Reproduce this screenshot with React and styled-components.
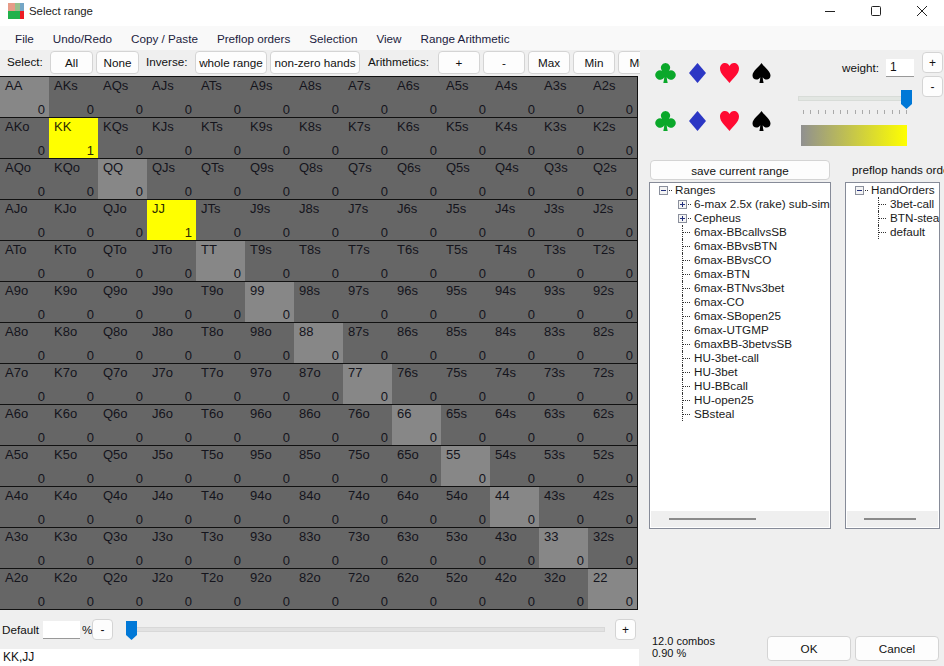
import styled, { createGlobalStyle } from "styled-components";

const GlobalStyle = createGlobalStyle`
  html, body {
    margin: 0;
    padding: 0;
    height: 100%;
    overflow: hidden;
    background: #efefef;
  }
  #root {
    height: 100%;
  }
`;

const Window = styled.div`
  width: 944px;
  height: 666px;
  display: flex;
  flex-direction: column;
  overflow: hidden;
  background: #efefef;
  color: #111;
  font-family: "Liberation Sans", Arial, sans-serif;
  font-size: 11.7px;
`;

const TitleBar = styled.div`
  height: 26px;
  box-sizing: border-box;
  flex: none;
  display: flex;
  align-items: center;
  background: #fff;
  padding: 0 0 5px 8px;
  margin-right: -1px;
`;
const AppIcon = styled.svg`
  width: 16px;
  height: 16px;
  flex: none;
`;
const TitleText = styled.div`
  margin-left: 5px;
  font-size: 11.4px;
  color: #222;
  flex: 1;
`;
const WinButton = styled.div`
  width: 46px;
  height: 21px;
  display: flex;
  align-items: center;
  justify-content: center;
`;

const MenuBar = styled.div`
  height: 24px;
  flex: none;
  display: flex;
  align-items: center;
  gap: 19px;
  padding-left: 15px;
  background: #f9f9f9;
`;
const MenuItem = styled.div`
  color: #1c1c40;
`;

const Main = styled.div`
  flex: 1;
  display: flex;
  min-height: 0;
`;
const LeftColumn = styled.div`
  width: 640px;
  flex: none;
  display: flex;
  flex-direction: column;
`;

const Toolbar = styled.div`
  height: 26px;
  flex: none;
  display: flex;
  align-items: center;
  padding-left: 7px;
  overflow: hidden;
  white-space: nowrap;
`;
const ToolLabel = styled.div`
  flex: none;
  width: ${(p) => p.$w}px;
  margin-bottom: 4px;
`;
const ToolButton = styled.div`
  flex: none;
  box-sizing: border-box;
  width: ${(p) => p.$w}px;
  height: 23px;
  margin: 0 ${(p) => p.$gap ?? 3}px 1px 0;
  display: flex;
  align-items: center;
  justify-content: center;
  background: #fdfdfd;
  border: 1px solid #d4d4d4;
  border-radius: 4px;
`;

const Grid = styled.div`
  display: grid;
  grid-template-columns: repeat(13, 49px);
  grid-auto-rows: 41px;
  width: 638px;
  box-sizing: border-box;
  border-top: 1px solid #111;
  border-left: 1px solid #111;
  background: #111;
`;
const Cell = styled.div`
  box-sizing: border-box;
  border-right: 1px solid #111;
  border-bottom: 1px solid #111;
  margin-left: -1px;
  background: ${(p) => (p.$on ? "#ffff00" : p.$pair ? "#878787" : "#666666")};
  color: ${(p) => (p.$on ? "#2c2c00" : "#14141c")};
  display: flex;
  flex-direction: column;
  justify-content: space-between;
  padding: 1px 4px 0 5px;
  font-size: 13px;
  line-height: 16px;
`;
const CellValue = styled.div`
  align-self: flex-end;
  line-height: 15px;
`;

const SliderRow = styled.div`
  height: 39px;
  flex: none;
  display: flex;
  align-items: center;
  padding-left: 2px;
`;
const DefaultLabel = styled.div`
  width: 41px;
  flex: none;
`;
const SmallInput = styled.div`
  box-sizing: border-box;
  width: ${(p) => p.$w}px;
  height: 18px;
  margin-top: ${(p) => p.$top || 0}px;
  background: #fff;
  border-bottom: 1px solid #999;
  flex: none;
  padding-left: 4px;
  line-height: 17px;
  font-size: 12px;
`;
const Percent = styled.span`
  margin: 0 2px 0 2px;
  width: 8px;
  flex: none;
`;
const SquareButton = styled.div`
  box-sizing: border-box;
  width: 21px;
  height: 21px;
  flex: none;
  margin-right: ${(p) => p.$right || 0}px;
  display: flex;
  align-items: center;
  justify-content: center;
  background: #fdfdfd;
  border: 1px solid #d4d4d4;
  border-radius: 4px;
  font-size: 12px;
`;
const TrackSlot = styled.div`
  flex: 1;
  margin: 0 10px 0 13px;
`;
const Track = styled.div`
  position: relative;
  box-sizing: border-box;
  height: 5px;
  background: #e2e2e2;
  border: 1px solid #d8d8d8;
`;
const Thumb = styled.svg`
  position: absolute;
  top: -7px;
  left: ${(p) => p.$left}px;
  width: 11px;
  height: 19px;
`;
const ResultBox = styled.div`
  height: 17px;
  background: #fff;
  padding-left: 3px;
  line-height: 17px;
  font-size: 12px;
  flex: none;
  margin-right: 1px;
`;

const RightColumn = styled.div`
  flex: 1;
  min-width: 0;
  display: flex;
  flex-direction: column;
  overflow: hidden;
`;
const SuitPanel = styled.div`
  height: 110px;
  box-sizing: border-box;
  flex: none;
  display: flex;
  padding: 12px 0 0 15px;
`;
const SuitRows = styled.div`
  width: 143px;
  flex: none;
  display: flex;
  flex-direction: column;
  gap: 26px;
`;
const SuitRow = styled.div`
  display: flex;
  gap: 11px;
  height: 22px;
`;
const Suit = styled.svg`
  width: 21px;
  height: 22px;
`;
const WeightPanel = styled.div`
  flex: 1;
  margin-top: -10px;
  display: flex;
  flex-direction: column;
`;
const WeightRow = styled.div`
  display: flex;
  align-items: flex-start;
  justify-content: flex-end;
  gap: 8px;
  padding-right: 1px;
`;
const WeightLabel = styled.div`
  margin: 9px -1px 0 0;
`;
const WeightStack = styled.div`
  display: flex;
  flex-direction: column;
  gap: 3px;
`;
const WeightSlider = styled.div`
  position: relative;
  box-sizing: border-box;
  width: 110px;
  margin-top: -1px;
  height: 5px;
  background: #e2e6e2;
  border: 1px solid #d8dcd8;
`;
const Ticks = styled.div`
  width: 104px;
  height: 4px;
  margin: 9px 0 0 5px;
  background: repeating-linear-gradient(90deg, #aaa 0 1px, transparent 1px 7.38px);
`;
const GradientBar = styled.div`
  width: 106px;
  height: 21px;
  margin: 11px 0 0 3px;
  background: linear-gradient(90deg, #909090, #ffff00);
`;

const TreeArea = styled.div`
  display: flex;
  padding-left: 9px;
  gap: 14px;
`;
const TreeColumn = styled.div`
  width: ${(p) => p.$w}px;
  flex: none;
`;
const SaveButton = styled.div`
  box-sizing: border-box;
  width: 180px;
  height: 20px;
  margin-left: 1px;
  display: flex;
  align-items: center;
  justify-content: center;
  background: #fdfdfd;
  border: 1px solid #d4d4d4;
  border-radius: 4px;
`;
const TreeCaption = styled.div`
  height: 20px;
  line-height: 20px;
  padding-left: 7px;
  white-space: nowrap;
`;
const TreeBox = styled.div`
  box-sizing: border-box;
  height: 347px;
  margin-top: 2px;
  background: #fff;
  border: 1px solid #868b98;
  display: flex;
  flex-direction: column;
  overflow: hidden;
`;
const TreeBody = styled.div`
  flex: 1;
  padding: 0 0 0 9px;
  overflow: hidden;
`;
const TreeRow = styled.div`
  height: 14px;
  line-height: 14px;
  display: flex;
  align-items: center;
  white-space: nowrap;
  padding-left: ${(p) => p.$indent || 0}px;
  color: #1a1a1a;
`;
const Expander = styled.svg`
  width: 9px;
  height: 9px;
  flex: none;
  margin-right: 1px;
`;
const LeafDots = styled.span`
  flex: none;
  width: 8px;
  height: 14px;
  margin: 0 4px 0 4px;
  border-left: 1px dotted #333;
  position: relative;
  box-sizing: border-box;
  &::after {
    content: "";
    position: absolute;
    left: 0;
    top: 7px;
    width: 7px;
    border-top: 1px dotted #333;
  }
`;
const StubDots = styled.span`
  flex: none;
  width: 3px;
  margin-right: 3px;
  border-top: 1px dotted #333;
`;
const HScroll = styled.div`
  height: 16px;
  flex: none;
  margin: 0 1px 1px;
  background: #efefef;
  display: flex;
  align-items: center;
  padding-left: ${(p) => p.$left}px;
`;
const HThumb = styled.div`
  width: ${(p) => p.$w}px;
  height: 2px;
  background: #8a8a8a;
`;

const Footer = styled.div`
  flex: 1;
  display: flex;
  align-items: flex-end;
  padding: 0 5px 5px 12px;
`;
const Combos = styled.div`
  flex: 1;
  font-size: 11px;
  line-height: 12px;
  margin-bottom: 2px;
`;
const DialogButton = styled.div`
  box-sizing: border-box;
  width: 84px;
  height: 25px;
  margin-left: 4px;
  display: flex;
  align-items: center;
  justify-content: center;
  background: #fdfdfd;
  border: 1px solid #d4d4d4;
  border-radius: 4px;
`;

const RANKS = ["A", "K", "Q", "J", "T", "9", "8", "7", "6", "5", "4", "3", "2"];
const SELECTED = ["KK", "JJ"];
const RANGES = [
  "6max-BBcallvsSB", "6max-BBvsBTN", "6max-BBvsCO", "6max-BTN", "6max-BTNvs3bet", "6max-CO",
  "6max-SBopen25", "6max-UTGMP", "6maxBB-3betvsSB", "HU-3bet-call", "HU-3bet", "HU-BBcall",
  "HU-open25", "SBsteal",
];

const handName = (r, c) => {
  if (r === c) return RANKS[r] + RANKS[c];
  return r < c ? RANKS[r] + RANKS[c] + "s" : RANKS[c] + RANKS[r] + "o";
};

const SUITS = [
  { color: "#0aa82a", d: "M10.5 1a4.6 4.6 0 0 0-3.4 7.7 4.8 4.8 0 1 0 2.200 6.600c-.2 2-.6 3.900-1 5.700h4.400c-.4-1.800-.8-3.700-1-5.700a4.800 4.800 0 1 0 2.200-6.600A4.600 4.600 0 0 0 10.500 1z" },
  { color: "#2c37c4", d: "M10.500 1 19 11l-8.500 10L2 11z" },
  { color: "#ff0a32", d: "M10.500 21C7 16 1 12 1 6.500 1 3 3.500 1 6 1c2 0 3.500 1 4.500 3 1-2 2.500-3 4.500-3 2.500 0 5 2 5 5.500C20 12 14 16 10.500 21z" },
  { color: "#000", d: "M10.500 1C8 5 1.500 9 1.500 13.500c0 2.500 1.800 4 3.800 4 1.700 0 3-.8 4-2.300-.2 2-.4 4-.9 5.800h4.200c-.5-1.800-.7-3.800-.9-5.800 1 1.500 2.300 2.300 4 2.300 2 0 3.800-1.500 3.800-4C19.500 9 13 5 10.500 1z" },
];

const SuitSet = () => (
  <SuitRow>
    {SUITS.map((s) => (
      <Suit key={s.color} viewBox="0 0 21 22">
        <path d={s.d} fill={s.color} />
      </Suit>
    ))}
  </SuitRow>
);

const Collapse = ({ open }) => (
  <Expander viewBox="0 0 9 9">
    <rect x="0.5" y="0.5" width="8" height="8" fill="#f4f4f4" stroke="#8a8f9c" />
    <path d={open ? "M2 4.500h5" : "M2 4.500h5M4.500 2v5"} stroke="#23307c" fill="none" />
  </Expander>
);

const SliderThumb = ({ left }) => (
  <Thumb $left={left} viewBox="0 0 11 19">
    <path d="M0 0h11v14l-5.500 5L0 14z" fill="#0078d7" />
  </Thumb>
);

export default function App() {
  return (
    <Window>
      <GlobalStyle />
      <TitleBar>
        <AppIcon viewBox="0 0 16 16">
          <rect width="7" height="8" fill="#e79c88" />
          <rect x="7" width="5" height="8" fill="#97c08e" />
          <rect x="12" width="4" height="8" fill="#74a6c6" />
          <rect y="8" width="12" height="8" fill="#22b14c" />
          <rect x="12" y="8" width="4" height="8" fill="#ed1c24" />
        </AppIcon>
        <TitleText>Select range</TitleText>
        <WinButton>
          <svg width="10" height="10" viewBox="0 0 10 10"><path d="M0 5.500h10" stroke="#222" /></svg>
        </WinButton>
        <WinButton>
          <svg width="10" height="10" viewBox="0 0 10 10"><rect x="0.5" y="0.5" width="9" height="9" rx="1" fill="none" stroke="#222" /></svg>
        </WinButton>
        <WinButton>
          <svg width="10" height="10" viewBox="0 0 10 10"><path d="M0 0l10 10M10 0L0 10" stroke="#222" /></svg>
        </WinButton>
      </TitleBar>
      <MenuBar>
        {["File", "Undo/Redo", "Copy / Paste", "Preflop orders", "Selection", "View", "Range Arithmetic"].map((m) => (
          <MenuItem key={m}>{m}</MenuItem>
        ))}
      </MenuBar>
      <Main>
        <LeftColumn>
          <Toolbar>
            <ToolLabel $w={43}>Select:</ToolLabel>
            <ToolButton $w={43}>All</ToolButton>
            <ToolButton $w={43} $gap={7}>None</ToolButton>
            <ToolLabel $w={49}>Inverse:</ToolLabel>
            <ToolButton $w={72}>whole range</ToolButton>
            <ToolButton $w={90} $gap={8}>non-zero hands</ToolButton>
            <ToolLabel $w={70}>Arithmetics:</ToolLabel>
            <ToolButton $w={42}>+</ToolButton>
            <ToolButton $w={42}>-</ToolButton>
            <ToolButton $w={42}>Max</ToolButton>
            <ToolButton $w={42}>Min</ToolButton>
            <ToolButton $w={42}>Mul</ToolButton>
          </Toolbar>
          <Grid>
            {RANKS.map((_, r) =>
              RANKS.map((_, c) => {
                const name = handName(r, c);
                const on = SELECTED.includes(name);
                return (
                  <Cell key={name} $pair={r === c} $on={on}>
                    <div>{name}</div>
                    <CellValue>{on ? 1 : 0}</CellValue>
                  </Cell>
                );
              })
            )}
          </Grid>
          <SliderRow>
            <DefaultLabel>Default</DefaultLabel>
            <SmallInput $w={37} />
            <Percent>%</Percent>
            <SquareButton>-</SquareButton>
            <TrackSlot>
              <Track>
                <SliderThumb left={-1} />
              </Track>
            </TrackSlot>
            <SquareButton $right={4}>+</SquareButton>
          </SliderRow>
          <ResultBox>KK,JJ</ResultBox>
        </LeftColumn>
        <RightColumn>
          <SuitPanel>
            <SuitRows>
              <SuitSet />
              <SuitSet />
            </SuitRows>
            <WeightPanel>
              <WeightRow>
                <WeightLabel>weight:</WeightLabel>
                <SmallInput $w={28} $top={7}>1</SmallInput>
                <WeightStack>
                  <SquareButton>+</SquareButton>
                  <SquareButton>-</SquareButton>
                </WeightStack>
              </WeightRow>
              <WeightSlider>
                <SliderThumb left={102} />
              </WeightSlider>
              <Ticks />
              <GradientBar />
            </WeightPanel>
          </SuitPanel>
          <TreeArea>
            <TreeColumn $w={182}>
              <SaveButton>save current range</SaveButton>
              <TreeBox>
                <TreeBody>
                  <TreeRow><Collapse open /><StubDots />Ranges</TreeRow>
                  <TreeRow $indent={19}><Collapse /><StubDots />6-max 2.5x (rake) sub-sim</TreeRow>
                  <TreeRow $indent={19}><Collapse /><StubDots />Cepheus</TreeRow>
                  {RANGES.map((n) => (
                    <TreeRow key={n} $indent={19}><LeafDots />{n}</TreeRow>
                  ))}
                </TreeBody>
                <HScroll $left={18}><HThumb $w={87} /></HScroll>
              </TreeBox>
            </TreeColumn>
            <TreeColumn $w={95}>
              <TreeCaption>preflop hands orders</TreeCaption>
              <TreeBox>
                <TreeBody>
                  <TreeRow><Collapse open /><StubDots />HandOrders</TreeRow>
                  {["3bet-call", "BTN-steal", "default"].map((n) => (
                    <TreeRow key={n} $indent={19}><LeafDots />{n}</TreeRow>
                  ))}
                </TreeBody>
                <HScroll $left={17}><HThumb $w={52} /></HScroll>
              </TreeBox>
            </TreeColumn>
          </TreeArea>
          <Footer>
            <Combos>12.0 combos<br />0.90 %</Combos>
            <DialogButton>OK</DialogButton>
            <DialogButton>Cancel</DialogButton>
          </Footer>
        </RightColumn>
      </Main>
    </Window>
  );
}
